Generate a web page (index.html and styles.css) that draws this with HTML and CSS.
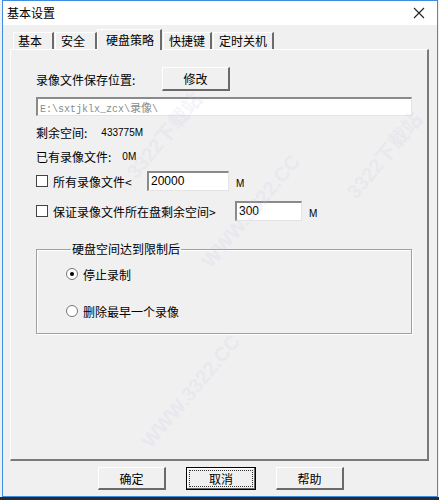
FILE: index.html
```html
<!DOCTYPE html>
<html lang="zh-CN">
<head>
  <meta charset="UTF-8">
  <title>基本设置</title>
  <link rel="stylesheet" href="styles.css">
</head>
<body>
  <div class="ventana">
    <!-- Barra de título -->
    <div class="titulo">
      <span>基本设置</span>
      <svg class="cerrar" width="12" height="12" viewBox="0 0 12 12">
        <path d="M1 1 L11 11 M11 1 L1 11" stroke="#222" stroke-width="1.1" fill="none"/>
      </svg>
    </div>

    <div class="cuerpo">
      <!-- Pestañas -->
      <div class="pestanas">
        <div class="pestana">基本</div>
        <div class="pestana">安全</div>
        <div class="pestana activa">硬盘策略</div>
        <div class="pestana">快捷键</div>
        <div class="pestana">定时关机</div>
      </div>

      <div class="panel">
        <div class="fila">
          <span class="etiqueta">录像文件保存位置:</span>
          <button class="boton boton-mod">修改</button>
        </div>
        <div class="campo ruta">E:\sxtjklx_zcx\<span class="cjk">录像</span>\</div>

        <div class="fila info">
          <span>剩余空间:</span><span class="num n1">433775M</span>
        </div>
        <div class="fila info">
          <span>已有录像文件:</span><span class="num n2">0M</span>
        </div>

        <div class="fila chk">
          <span class="caja"></span>
          <span class="texto-chk t1">所有录像文件&lt;</span>
          <div class="campo valor v1">20000</div>
          <span class="num unidad">M</span>
        </div>
        <div class="fila chk">
          <span class="caja"></span>
          <span class="texto-chk t2">保证录像文件所在盘剩余空间&gt;</span>
          <div class="campo valor v2">300</div>
          <span class="num unidad">M</span>
        </div>

        <fieldset class="grupo">
          <legend>硬盘空间达到限制后</legend>
          <div class="radio-fila primera">
            <span class="radio marcado"></span><span>停止录制</span>
          </div>
          <div class="radio-fila">
            <span class="radio"></span><span>删除最早一个录像</span>
          </div>
        </fieldset>

        <!-- Marcas de agua -->
        <span class="marca m1">3322下载站</span>
        <span class="marca m2">WWW.3322.CC</span>
        <span class="marca m3">3322下载站</span>
        <span class="marca m4">WWW.3322.CC</span>
      </div>

      <div class="botones">
        <button class="boton">确定</button>
        <button class="boton defecto"><span>取消</span></button>
        <button class="boton">帮助</button>
      </div>
    </div>
  </div>
  <div class="fondo-inferior"></div>
</body>
</html>
```

FILE: styles.css
```css
/* === BASE === */
* {
  margin: 0;
  padding: 0;
  box-sizing: border-box;
}
body {
  width: 439px;
  height: 500px;
  background: #f0f0f0;
  font-family: "Noto Sans CJK SC", "Liberation Sans", sans-serif;
  font-size: 12px;
  color: #000;
  overflow: hidden;
  padding-left: 2px;
}

/* === VENTANA === */
.ventana {
  width: 436px;
  height: 497px;
  border: 1px solid #3d8ee0;
  background: #f0f0f0;
  display: flex;
  flex-direction: column;
}
.fondo-inferior {
  height: 3px;
  background: #2b2b2b;
  margin-left: -2px;
}
.titulo {
  height: 24px;
  background: #fff;
  display: flex;
  align-items: center;
  justify-content: space-between;
  padding: 0 12px 0 4px;
  font-size: 12px;
  line-height: 1;
}
.cuerpo {
  flex: 1;
  padding: 4px 8px 0 7px;
  display: flex;
  flex-direction: column;
}

/* === PESTAÑAS === */
.pestanas {
  display: flex;
  height: 20px;
  align-items: flex-end;
  padding-left: 3px;
  position: relative;
  z-index: 1;
}
.pestana {
  height: 17px;
  padding: 0 5px;
  line-height: 16px;
  border-top: 1px solid #fff;
  border-left: 1px solid #fff;
  border-right: 2px solid #6b6b6b;
  margin-right: 1px;
}
.pestana:first-child {
  padding-left: 4px;
  padding-right: 10px;
}
.pestana:nth-child(2) {
  padding-right: 10px;
}
.pestana.activa {
  height: 21px;
  margin-bottom: -1px;
  background: #f0f0f0;
  padding: 2px 6px 0 8px;
  margin-left: -1px;
}

/* === PANEL === */
.panel {
  position: relative;
  height: 412px;
  border-top: 1px solid #fff;
  border-left: 1px solid #fff;
  border-right: 2px solid #7a7a7a;
  border-bottom: 2px solid #7a7a7a;
  padding: 17px 13px 0 25px;
  overflow: hidden;
}
.fila {
  display: flex;
  align-items: center;
}
.etiqueta {
  width: 126px;
}

/* === BOTONES === */
.boton {
  font-family: "Noto Sans CJK SC", sans-serif;
  font-size: 12px;
  background: #f0f0f0;
  border-top: 1px solid #fff;
  border-left: 1px solid #fff;
  border-right: 2px solid #6a6a6a;
  border-bottom: 2px solid #6a6a6a;
  width: 68px;
  height: 23px;
  color: #000;
}
.boton-mod {
  height: 24px;
}

/* === CAMPOS === */
.campo {
  background: #fff;
  border-top: 2px solid #8a8a8a;
  border-left: 2px solid #8a8a8a;
  border-right: 1px solid #e4e4e4;
  border-bottom: 1px solid #e4e4e4;
  height: 19px;
  line-height: 16px;
  padding-left: 2px;
  font-size: 12px;
}
.ruta {
  margin-top: 6px;
  width: 376px;
  font-family: "Liberation Mono", monospace;
  font-size: 10px;
  color: #8c8c8c;
}
.ruta .cjk {
  font-family: "Noto Sans CJK SC", sans-serif;
  font-size: 11px;
}
.info {
  margin-top: 9px;
  height: 15px;
}
.info + .info {
  margin-top: 9px;
}
.num {
  font-family: "Liberation Sans", sans-serif;
  font-size: 10px;
}
.n1 { margin-left: 14px; }
.n2 { margin-left: 11px; }

.chk {
  height: 22px;
  margin-top: 6px;
}
.chk + .chk {
  margin-top: 8px;
}
.caja {
  width: 12px;
  height: 12px;
  border: 1px solid #444;
  background: #fff;
  margin-right: 5px;
}
.t1 { width: 94px; }
.t2 { width: 182px; }
.valor {
  font-family: "Liberation Sans", sans-serif;
  height: 20px;
  line-height: 17px;
  font-size: 12px;
}
.v1 { width: 82px; }
.v2 { width: 67px; }
.unidad {
  margin-left: 7px;
  margin-top: 4px;
}

/* === GRUPO === */
.grupo {
  margin-top: 20px;
  width: 376px;
  height: 92px;
  border: 1px solid #a0a0a0;
  box-shadow: inset 1px 1px 0 #fff, 1px 1px 0 #fff;
  padding: 10px 0 0 29px;
}
.grupo legend {
  padding: 0 1px;
  margin-left: 5px;
  line-height: 14px;
}
.radio-fila {
  display: flex;
  align-items: center;
  height: 16px;
}
.radio-fila.primera {
  margin-bottom: 21px;
}
.radio {
  width: 12px;
  height: 12px;
  border-radius: 50%;
  border: 1px solid #777;
  background: #fff;
  margin-right: 5px;
  display: flex;
  align-items: center;
  justify-content: center;
}
.radio.marcado::after {
  content: "";
  width: 4px;
  height: 4px;
  border-radius: 50%;
  background: #000;
}

/* === BOTONES INFERIORES === */
.botones {
  display: flex;
  justify-content: center;
  gap: 20px;
  padding-top: 6px;
  padding-left: 3px;
}
.defecto {
  border: 1px solid #000;
  box-shadow: inset -1px -1px 0 #6a6a6a, inset 1px 1px 0 #fff;
  padding: 2px;
  width: 70px;
}
.defecto span {
  display: block;
  height: 100%;
  border: 1px dotted #333;
  line-height: 15px;
}

/* === MARCAS DE AGUA === */
.marca {
  position: absolute;
  font-family: "Liberation Sans", "Noto Sans CJK SC", sans-serif;
  font-weight: bold;
  font-size: 20px;
  color: rgba(190, 190, 230, 0.18);
  transform: rotate(-50deg);
  white-space: nowrap;
  pointer-events: none;
}
.m1 { left: 100px; top: 70px; }
.m2 { left: 170px; top: 150px; }
.m3 { left: 320px; top: 90px; }
.m4 { left: 110px; top: 330px; }
```
